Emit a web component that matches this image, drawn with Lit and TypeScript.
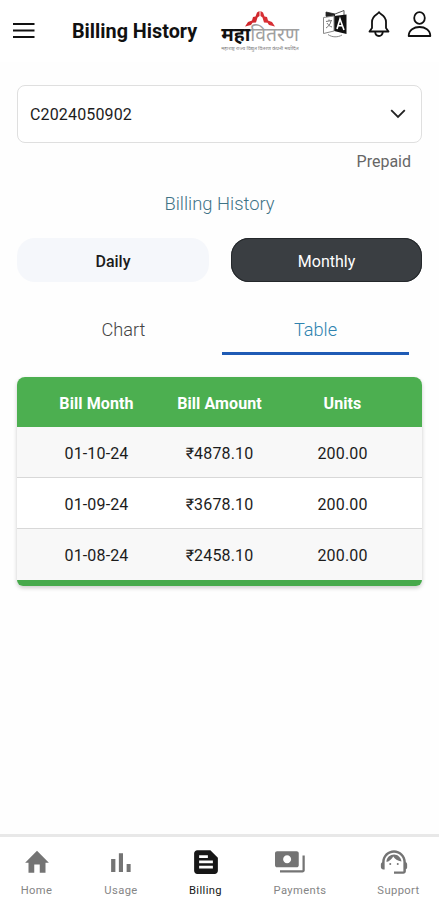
import { LitElement, html, css, svg } from "lit";
import { customElement } from "lit/decorators.js";
import { classMap } from "lit/directives/class-map.js";

const bills = [
  { month: "01-10-24", amount: "₹4878.10", units: "200.00" },
  { month: "01-09-24", amount: "₹3678.10", units: "200.00" },
  { month: "01-08-24", amount: "₹2458.10", units: "200.00" },
];

const navItems = [
  { id: "home", label: "Home", icon: svg`<path d="M9.800 20.500v-6.500h4.400v6.500h4.600v-8h2.700L12 3 2.500 12.500h2.700v8z"/>` },
  { id: "usage", label: "Usage", icon: svg`<path d="M4.100 9.500h3.400V20H4.100zM16.500 13.500h3.200V20h-3.200zM10.300 5h3.300v15h-3.300z"/>` },
  {
    id: "billing",
    label: "Billing",
    icon: svg`<path fill-rule="evenodd" d="M15.500 2.500H5c-1.400 0-2.500 1.100-2.500 2.500v14c0 1.400 1.100 2.500 2.500 2.500h14c1.400 0 2.500-1.100 2.500-2.500V8.500zM6.500 6.500h7v2.200h-7zm11 10.700h-11v-2.200h11zm0-4.200h-11v-2.200h11z"/>`,
  },
  {
    id: "payments",
    label: "Payments",
    icon: svg`<path fill-rule="evenodd" d="M19 14.500V5c0-1-.7-1.700-1.700-1.700H1.700C.7 3.300 0 4 0 5v9.500c0 1 .7 1.700 1.700 1.700h15.600c1 0 1.700-.7 1.700-1.700zM9.700 13c-1.800 0-3.200-1.400-3.200-3.200s1.400-3.200 3.200-3.200 3.200 1.400 3.200 3.200S11.500 13 9.700 13zm14.100-6.300V18.500c0 1-.8 1.800-1.800 1.800H4v-1.800h18V6.700z"/>`,
  },
  {
    id: "support",
    label: "Support",
    icon: svg`<path d="M21.500 12.220C21.500 6.500 17 2.500 12 2.500c-5 0-9.500 3.900-9.500 9.780-.6.340-1 .980-1 1.720v2c0 1.100.9 2 2 2h1v-6.100C4.500 7.700 7.900 4.500 12 4.500s7.500 3.200 7.500 7.400V19.500H12v1.800h7.500c1.100 0 2-.9 2-2v-1.520c.59-.310 1-.920 1-1.640v-2.300c0-.700-.410-1.310-1-1.620z"/><circle cx="9" cy="13.500" r=".8"/><circle cx="15" cy="13.500" r=".8"/><path d="M18 11.530C17.520 8.180 15.040 6 12.050 6c-3.030 0-6.290 2.510-6.030 6 2.470-.6 4.330-2.600 5.360-4.400 1.310 2 3.500 3.500 6.620 3.930z"/>`,
  },
];

@customElement("app-root")
export class AppRoot extends LitElement {
  static styles = css`
    :host {
      display: flex;
      flex-direction: column;
      height: 900px;
      width: 100%;
      overflow: hidden;
      box-sizing: border-box;
      background: #fefefe;
      font-family: Roboto, "Noto Sans", sans-serif;
      color: #1c1c1c;
    }
    svg { display: block; }
    .header {
      display: flex;
      align-items: flex-start;
      height: 62px;
      flex: none;
      background: #fff;
    }
    .menu { margin: 22px 0 0 13px; }
    .title {
      margin: 20px 0 0 37px;
      width: 127px;
      font-size: 19.800px;
      line-height: 24px;
      font-weight: 700;
      white-space: nowrap;
      color: #111;
    }
    .brand {
      width: 80px;
      height: 44px;
      margin: 8px 0 0 21px;
      display: flex;
      flex-direction: column;
      align-items: center;
    }
    .peaks { margin-top: 2px; flex: none; }
    .name {
      margin-top: -3px;
      font-size: 19.300px;
      line-height: 20px;
      height: 20px;
      color: #a0a0a0;
      white-space: nowrap;
    }
    .name b { color: #111; }
    .motto {
      margin-top: 0;
      font-size: 5.100px;
      line-height: 6px;
      color: #777;
      white-space: nowrap;
    }
    .translate { margin: 8px 0 0 22px; }
    .bell { margin: 10px 0 0 20px; }
    .person { margin: 10px 0 0 17px; }
    .main { flex: 1; padding: 23px 17px 0; }
    .select {
      display: flex;
      align-items: center;
      justify-content: space-between;
      box-sizing: border-box;
      height: 58px;
      padding: 0 15px 0 12px;
      border: 1.500px solid #dfdfdf;
      border-radius: 8px;
      background: #fff;
      font-size: 16px;
      letter-spacing: 0.150px;
    }
    .plan {
      margin: 9px 11px 0 0;
      text-align: right;
      font-size: 16px;
      line-height: 20px;
      color: #666;
    }
    .heading {
      margin-top: 20px;
      text-align: center;
      font-size: 18.400px;
      line-height: 24px;
      font-weight: 300;
      color: #3f7387;
    }
    .periods {
      display: grid;
      grid-template-columns: 192px 191px;
      justify-content: space-between;
      margin-top: 22px;
    }
    .period {
      height: 44px;
      line-height: 47px;
      border-radius: 18px;
      background: #f5f7fb;
      text-align: center;
      font-size: 16px;
      font-weight: 500;
    }
    .period.active { background: #3a3e42; color: #fff; box-shadow: inset 0 0 0 1px #24282b; font-weight: 400; }
    .tabs {
      display: grid;
      grid-template-columns: 187px 187px;
      gap: 5px;
      margin: 24px 0 0 13px;
    }
    .tab {
      height: 46px;
      line-height: 48px;
      border-bottom: 3px solid transparent;
      text-align: center;
      font-size: 18.200px;
      font-weight: 300;
      color: #444;
    }
    .tab.active { color: #2f83b0; border-color: #1f5bb5; }
    .table {
      margin-top: 22px;
      border-radius: 8px 8px 6px 6px;
      border-bottom: 6px solid #46a94b;
      overflow: hidden;
      box-shadow: 0 2px 4px rgba(0, 0, 0, 0.200);
    }
    .row {
      display: grid;
      grid-template-columns: repeat(3, 123px);
      justify-content: center;
      box-sizing: border-box;
      height: 51px;
      line-height: 53px;
      border-bottom: 1px solid #d8d8d8;
      background: #fff;
      text-align: center;
      font-size: 16px;
      letter-spacing: 0.150px;
    }
    .row:nth-child(even) { background: #f8f8f8; }
    .row:last-child { border-bottom-color: #f8f8f8; }
    .row.head {
      height: 50px;
      line-height: 53px;
      border: 0;
      background: #4caf50;
      color: #fff;
      font-weight: 700;
      letter-spacing: 0.100px;
    }
    .nav {
      flex: none;
      position: relative;
      display: flex;
      box-sizing: border-box;
      height: 66px;
      border-top: 3px solid #e8e8e8;
      background: #fff;
    }
    .item {
      display: flex;
      flex-direction: column;
      align-items: center;
      color: #747474;
      font-size: 11.200px;
      letter-spacing: 0.400px;
      line-height: 14px;
      padding-top: 10px;
    }
    .item svg { margin-bottom: 7px; fill: currentColor; }
    .item span { color: #858585; }
    .item.active, .item.active span { color: #161616; }
    .home { width: 73px; }
    .usage { width: 96px; }
    .billing { width: 73px; }
    .payments { width: 116px; }
    .payments svg { margin-right: 20px; }
    .support { width: 81px; }
    .support svg { margin-right: 10px; }
  `;

  render() {
    return html`
      <header class="header">
        <svg class="menu" width="22" height="17" viewBox="0 0 22 17">
          <path d="M0 2h21.500M0 8.500h21.500M0 15h21.500" stroke="#111" stroke-width="2" />
        </svg>
        <div class="title">Billing History</div>
        <div class="brand">
          <svg class="peaks" width="32" height="18" viewBox="0 0 32 18">
            <path d="M1 16.500l3-4.500 4-1.500 1-3.500 2.500-.5L13 2.500 15.500 1v5l-2 1.500-1.500 5-3.500.2-1.500 2.300z" fill="#d0282d" />
            <path d="M31 16.500l-3-4.500-4-1.500-1-3.500-2.500-.5L19 2.500 16.500 1v5l2 1.500 1.500 5 3.500.2 1.500 2.300z" fill="#d82f34" />
          </svg>
          <div class="name"><b>महा</b>वितरण</div>
          <div class="motto">महाराष्ट्र राज्य विद्युत वितरण कंपनी मर्यादित</div>
        </div>
        <svg class="translate" width="26" height="30" viewBox="0 0 26 30" fill="none">
          <path d="M4 8V4l9 2 9-3.500V7" stroke="#555" stroke-width="1" />
          <path d="M4 4l9 2v6L4 9z" fill="#222" />
          <path d="M12 8l12.500-1.500V26L12 23z" fill="#111" />
          <path d="M1.500 9.500L12 8v15L1.500 25.500z" fill="#fff" stroke="#888" stroke-width="1" />
          <path d="M4 13.500l6-1M7 11.500v1.500M9 13c-.5 3-2.500 5.500-5 7M5 15c1 2 3 3.500 5 4" stroke="#777" />
          <path d="M15 21l3-10 4 11M16 17.500l5 .5" stroke="#fff" stroke-width="1.600" />
          <path d="M6 26.500c4 3 10 3 14 .5" stroke="#888" stroke-width="1" />
        </svg>
        <svg class="bell" width="22" height="28" viewBox="0 0 22 28" fill="none" stroke="#111" stroke-width="1.800" stroke-linejoin="round">
          <path d="M11 2.200C12 4.500 18 5 18 12v6l2.500 3.500H1.500L4 18v-6C4 5 10 4.500 11 2.200z" />
          <path d="M7.200 21.500c0 6 7.600 6 7.600 0" />
        </svg>
        <svg class="person" width="25" height="29" viewBox="0 0 25 29" fill="none" stroke="#111" stroke-width="1.800" stroke-linejoin="round">
          <ellipse cx="12.500" cy="8" rx="5.300" ry="5.800" />
          <path d="M1.700 26C1.700 14 23.300 14 23.300 26z" />
        </svg>
      </header>
      <main class="main">
        <div class="select">
          <span>C2024050902</span>
          <svg width="16" height="10" viewBox="0 0 16 10">
            <path d="M1.200 1.200L8 8l6.800-6.800" fill="none" stroke="#222" stroke-width="1.800" />
          </svg>
        </div>
        <div class="plan">Prepaid</div>
        <div class="heading">Billing History</div>
        <div class="periods">
          <div class="period">Daily</div>
          <div class="period active">Monthly</div>
        </div>
        <div class="tabs">
          <div class="tab">Chart</div>
          <div class="tab active">Table</div>
        </div>
        <div class="table">
          <div class="row head"><span>Bill Month</span><span>Bill Amount</span><span>Units</span></div>
          ${bills.map(
            (b) => html`<div class="row"><span>${b.month}</span><span>${b.amount}</span><span>${b.units}</span></div>`
          )}
        </div>
      </main>
      <nav class="nav">
        ${navItems.map(
          (n) => html`<div class=${classMap({ item: true, [n.id]: true, active: n.id === "billing" })}>
            <svg width="30" height="30" viewBox="0 0 24 24">${n.icon}</svg>
            <span>${n.label}</span>
          </div>`
        )}
      </nav>
    `;
  }
}
